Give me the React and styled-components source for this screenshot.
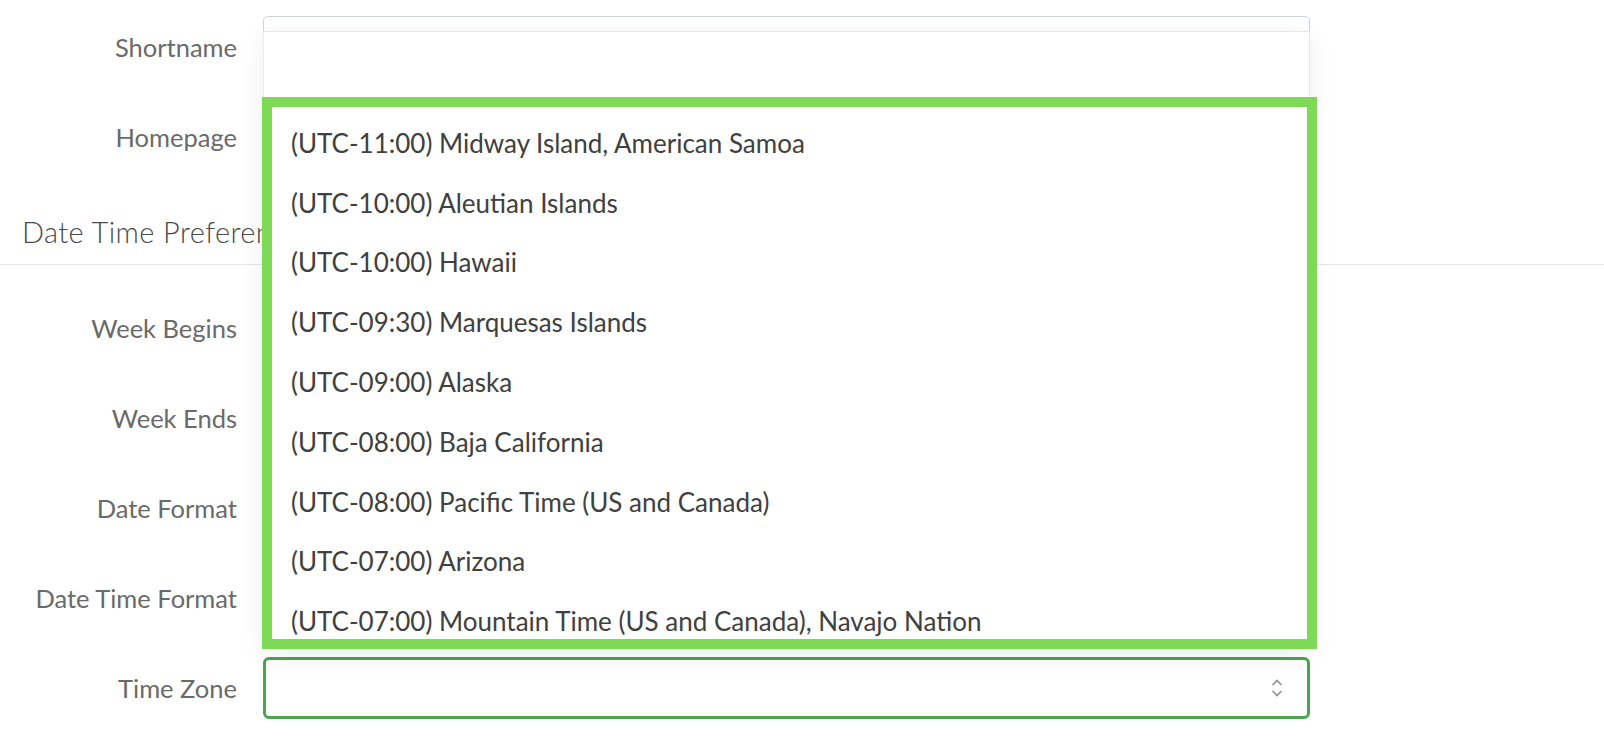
import styled, { createGlobalStyle } from "styled-components";

const GlobalStyle = createGlobalStyle`
  html, body {
    margin: 0;
    padding: 0;
    background: #ffffff;
  }
  body {
    font-family: "Lato", "Liberation Sans", sans-serif;
    -webkit-font-smoothing: antialiased;
  }
`;

const Page = styled.div`
  position: relative;
  width: 1604px;
  height: 740px;
  overflow: hidden;
  padding-top: 16px;
  box-sizing: border-box;
`;

const Row = styled.div`
  display: grid;
  grid-template-columns: 237px 1047px;
  column-gap: 26px;
  align-items: center;
  height: 62px;
  margin-bottom: 28px;
`;

const Label = styled.label`
  text-align: right;
  font-size: 25.5px;
  color: #6a6a6a;
  white-space: nowrap;
`;

const Input = styled.div`
  height: 62px;
  box-sizing: border-box;
  border: 1px solid #cfd3da;
  border-radius: 5px;
  background: #fff;
`;

const Select = styled.div`
  display: flex;
  align-items: center;
  justify-content: flex-end;
  height: 62px;
  box-sizing: border-box;
  padding-right: 24px;
  border: 3px solid ${(p) => (p.$focused ? "#4ca350" : "#cfd3da")};
  border-radius: 6px;
  background: #fff;
`;

const Section = styled.div`
  display: flex;
  align-items: center;
  height: 97px;
  padding-left: 22px;
  margin-top: -28px;
  box-sizing: border-box;
  border-bottom: 1px solid #e4e4ea;
  margin-bottom: 32px;
`;

const SectionTitle = styled.h2`
  margin: 30px 0 0;
  font-size: 29px;
  font-weight: 300;
  letter-spacing: 0.4px;
  color: #4a4a4a;
  white-space: nowrap;
`;

const Dropdown = styled.div`
  position: absolute;
  top: 31px;
  left: 263px;
  width: 1047px;
  height: 618px;
  display: flex;
  flex-direction: column;
  background: #fff;
  border-top: 1px solid #e6e6ec;
  border-left: 1px solid #ececf0;
  border-right: 1px solid #e6e6ec;
  box-sizing: border-box;
  box-shadow: 0 6px 26px rgba(0, 0, 0, 0.07);
  z-index: 2;
`;

const Spacer = styled.div`
  height: 65px;
  flex: none;
`;

const OptionList = styled.ul`
  flex: 1;
  list-style: none;
  margin: 0 -8px 0 -2px;
  padding: 6px 0 0;
  border: 10px solid #7ed957;
  overflow: hidden;
  background: #fff;
`;

const Option = styled.li`
  height: 59.8px;
  display: flex;
  align-items: center;
  padding-left: 19px;
  font-size: 26px;
  color: #404040;
  white-space: nowrap;
`;

const zones = [
  "(UTC-11:00) Midway Island, American Samoa",
  "(UTC-10:00) Aleutian Islands",
  "(UTC-10:00) Hawaii",
  "(UTC-09:30) Marquesas Islands",
  "(UTC-09:00) Alaska",
  "(UTC-08:00) Baja California",
  "(UTC-08:00) Pacific Time (US and Canada)",
  "(UTC-07:00) Arizona",
  "(UTC-07:00) Mountain Time (US and Canada), Navajo Nation",
];

function UpDownIcon() {
  return (
    <svg width="12" height="20" viewBox="0 0 12 20" fill="none">
      <path d="M1.5 7 L6 2.5 L10.5 7" stroke="#8a909a" strokeWidth="1.6" />
      <path d="M1.5 13 L6 17.5 L10.5 13" stroke="#8a909a" strokeWidth="1.6" />
    </svg>
  );
}

export default function App() {
  return (
    <>
      <GlobalStyle />
      <Page>
        <Row>
          <Label>Shortname</Label>
          <Input />
        </Row>
        <Row>
          <Label>Homepage</Label>
          <Input />
        </Row>
        <Section>
          <SectionTitle>Date Time Preferences</SectionTitle>
        </Section>
        <Row>
          <Label>Week Begins</Label>
          <Input />
        </Row>
        <Row>
          <Label>Week Ends</Label>
          <Input />
        </Row>
        <Row>
          <Label>Date Format</Label>
          <Input />
        </Row>
        <Row>
          <Label>Date Time Format</Label>
          <Input />
        </Row>
        <Row>
          <Label>Time Zone</Label>
          <Select $focused>
            <UpDownIcon />
          </Select>
        </Row>
        <Dropdown>
          <Spacer />
          <OptionList>
            {zones.map((z) => (
              <Option key={z}>{z}</Option>
            ))}
          </OptionList>
        </Dropdown>
      </Page>
    </>
  );
}
